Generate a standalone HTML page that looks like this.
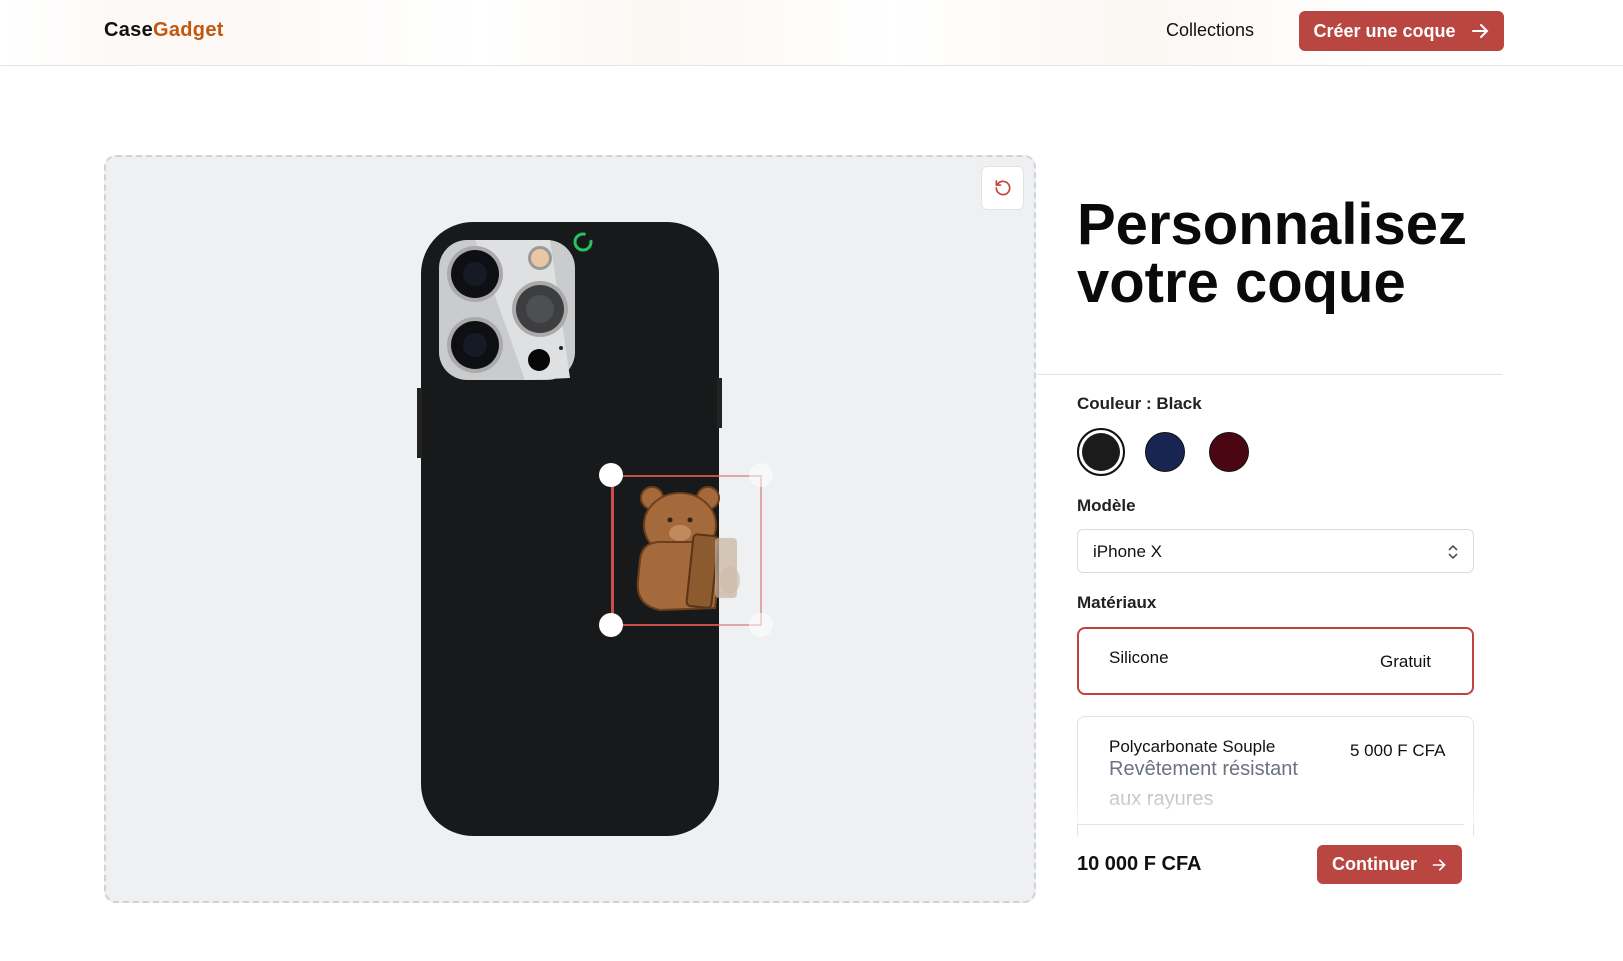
<!DOCTYPE html>
<html><head><meta charset="utf-8"><style>
*{box-sizing:border-box;margin:0;padding:0}
body{width:1623px;height:961px;overflow:hidden;background:#fff;font-family:"Liberation Sans",Arial,sans-serif;color:#111;position:relative}
.hdr{position:absolute;left:0;top:0;width:1623px;height:66px;border-bottom:1px solid #e5e5e5;background:linear-gradient(90deg,#fff 0,#fbf8f5 10%,#fff 30%,#fbf7f3 40%,#fff 55%,#fbf7f3 70%,#fff 85%)}
.abs{position:absolute}
.btn{background:#b94640;color:#fff;border-radius:6px;font-weight:bold;display:flex;align-items:center;justify-content:center;gap:14px}
.canvas{left:104px;top:155px;width:932px;height:748px;background:#eff0f2;border:2px dashed #cfd3d8;border-radius:12px}
.lbl{font-size:17px;font-weight:bold;color:#222}
</style></head><body>
<div class="hdr"></div>
<div class="abs" style="left:104px;top:19px;font-size:20px;font-weight:bold;letter-spacing:0.3px">Case<span style="color:#c2570f">Gadget</span></div>
<div class="abs" style="left:1166px;top:20px;font-size:18px;color:#111">Collections</div>
<div class="abs btn" style="left:1299px;top:11px;width:205px;height:40px;font-size:18px">Créer une coque <svg width="20" height="20" viewBox="0 0 20 20"><path d="M3 10h13M11 4l6 6-6 6" stroke="#fff" stroke-width="2" fill="none" stroke-linecap="round"/></svg></div>

<div class="abs canvas"></div>
<div class="abs" style="left:981px;top:166px;width:43px;height:44px;background:#fff;border-radius:6px;border:1px solid #e3e3e3;display:flex;align-items:center;justify-content:center">
<svg width="20" height="20" viewBox="0 0 24 24"><path d="M4 12a8 8 0 1 0 2.5-5.8L4 8.5M4 3.5v5h5" stroke="#c0443c" stroke-width="2" fill="none" stroke-linecap="round" stroke-linejoin="round"/></svg></div>

<!-- phone -->
<svg class="abs" style="left:415px;top:218px" width="360" height="622" viewBox="0 0 360 622">
<rect x="6" y="4" width="298" height="614" rx="52" fill="#18191b"/>
<rect x="2" y="170" width="5" height="70" fill="#222"/>
<rect x="302" y="160" width="5" height="50" fill="#222"/>
<rect x="24" y="22" width="136" height="140" rx="28" fill="#c9cbcd"/>
<path d="M60 22 L135 22 L155 160 L110 162 Z" fill="#dfe0e2"/>
<circle cx="60" cy="56" r="28" fill="#aaa"/><circle cx="60" cy="56" r="24" fill="#0e0f12"/><circle cx="60" cy="56" r="12" fill="#161a25"/>
<circle cx="60" cy="127" r="28" fill="#aaa"/><circle cx="60" cy="127" r="24" fill="#0e0f12"/><circle cx="60" cy="127" r="12" fill="#161a25"/>
<circle cx="125" cy="91" r="28" fill="#aaa"/><circle cx="125" cy="91" r="24" fill="#3d3e40"/><circle cx="125" cy="91" r="14" fill="#4d4f53"/>
<circle cx="125" cy="40" r="12" fill="#999"/><circle cx="125" cy="40" r="9" fill="#e8c8a4"/>
<circle cx="124" cy="142" r="11" fill="#070707"/><circle cx="146" cy="130" r="2" fill="#222"/>
<circle cx="168" cy="24" r="8" fill="none" stroke="#22c55e" stroke-width="3" stroke-dasharray="40 8"/>
</svg>

<!-- bear selection -->
<div class="abs" style="left:611px;top:475px;width:151px;height:151px;border:2px solid #c9504a;border-left-width:3px"></div>
<div class="abs" style="left:719px;top:473px;width:45px;height:155px;background:rgba(239,240,242,0.55)"></div>
<svg class="abs" style="left:630px;top:480px" width="120" height="135" viewBox="0 0 120 135">
<circle cx="22" cy="18" r="11" fill="#a46a3c" stroke="#6b3f1d" stroke-width="2"/>
<circle cx="78" cy="18" r="11" fill="#a46a3c" stroke="#6b3f1d" stroke-width="2"/>
<ellipse cx="50" cy="45" rx="36" ry="32" fill="#a46a3c" stroke="#6b3f1d" stroke-width="2"/>
<path d="M10 80 Q12 60 35 62 L80 62 Q90 90 85 128 L30 130 Q5 125 8 100Z" fill="#a46a3c" stroke="#6b3f1d" stroke-width="2"/>
<ellipse cx="50" cy="53" rx="11" ry="8" fill="#c08a5c"/>
<circle cx="40" cy="40" r="2.5" fill="#3a2210"/><circle cx="60" cy="40" r="2.5" fill="#3a2210"/>
<rect x="60" y="55" width="25" height="72" rx="4" fill="#8b5a2e" stroke="#5a3416" stroke-width="2" transform="rotate(6 72 90)"/>
<rect x="85" y="58" width="22" height="60" rx="4" fill="#c8b29e" opacity="0.7"/>
<ellipse cx="100" cy="100" rx="10" ry="14" fill="#cfbcaa" opacity="0.7"/>
</svg>
<div class="abs" style="left:599px;top:463px;width:24px;height:24px;border-radius:50%;background:#fff"></div>
<div class="abs" style="left:599px;top:613px;width:24px;height:24px;border-radius:50%;background:#fff"></div>
<div class="abs" style="left:749px;top:463px;width:24px;height:24px;border-radius:50%;background:rgba(255,255,255,.5)"></div>
<div class="abs" style="left:749px;top:613px;width:24px;height:24px;border-radius:50%;background:rgba(255,255,255,.5)"></div>

<!-- right panel -->
<div class="abs" style="left:1077px;top:196px;font-size:58px;font-weight:bold;line-height:58px;color:#0a0a0a">Personnalisez<br>votre coque</div>
<div class="abs" style="left:1037px;top:374px;width:465px;height:1px;background:#e3e3e3"></div>
<div class="abs lbl" style="left:1077px;top:394px">Couleur : Black</div>
<div class="abs" style="left:1077px;top:428px;width:48px;height:48px;border-radius:50%;border:2px solid #111;padding:3px;background:#fff"><div style="width:100%;height:100%;border-radius:50%;background:#1b1b1c"></div></div>
<div class="abs" style="left:1145px;top:432px;width:40px;height:40px;border-radius:50%;background:#182451;border:1px solid #111"></div>
<div class="abs" style="left:1209px;top:432px;width:40px;height:40px;border-radius:50%;background:#4a0713;border:1px solid #111"></div>
<div class="abs lbl" style="left:1077px;top:496px">Modèle</div>
<div class="abs" style="left:1077px;top:529px;width:397px;height:44px;border:1px solid #dcdcdc;border-radius:6px;font-size:17px;padding:12px 0 0 15px">iPhone X
<svg style="position:absolute;right:14px;top:14px" width="12" height="16" viewBox="0 0 12 16"><path d="M2 6l4-4 4 4M2 10l4 4 4-4" stroke="#555" stroke-width="1.6" fill="none"/></svg></div>
<div class="abs lbl" style="left:1077px;top:593px">Matériaux</div>
<div class="abs" style="left:1077px;top:627px;width:397px;height:68px;border:2px solid #c0443c;border-radius:8px"></div>
<div class="abs" style="left:1109px;top:648px;font-size:17px;color:#111">Silicone</div>
<div class="abs" style="left:1380px;top:652px;font-size:17px;color:#111">Gratuit</div>
<div class="abs" style="left:1077px;top:716px;width:397px;height:120px;border:1px solid #e3e3e3;border-bottom:none;border-radius:8px 8px 0 0"></div>
<div class="abs" style="left:1109px;top:737px;font-size:17px;color:#111">Polycarbonate Souple</div>
<div class="abs" style="left:1350px;top:741px;font-size:17px;color:#111">5 000 F CFA</div>
<div class="abs" style="left:1109px;top:758px;font-size:20px;color:#6b7280">Revêtement résistant</div>
<div class="abs" style="left:1109px;top:788px;font-size:20px;color:#b8bcc2">aux rayures</div>
<div class="abs" style="left:1070px;top:790px;width:410px;height:34px;background:linear-gradient(rgba(255,255,255,0),rgba(255,255,255,.7))"></div>
<div class="abs" style="left:1077px;top:824px;width:387px;height:1px;background:#e3e3e3"></div>
<div class="abs" style="left:1077px;top:853px;font-size:20px;font-weight:bold;color:#111">10 000 F CFA</div>
<div class="abs btn" style="left:1317px;top:845px;width:145px;height:39px;font-size:18px">Continuer <svg width="16" height="16" viewBox="0 0 20 20"><path d="M3 10h13M11 4l6 6-6 6" stroke="#fff" stroke-width="2" fill="none" stroke-linecap="round"/></svg></div>
</body></html>
